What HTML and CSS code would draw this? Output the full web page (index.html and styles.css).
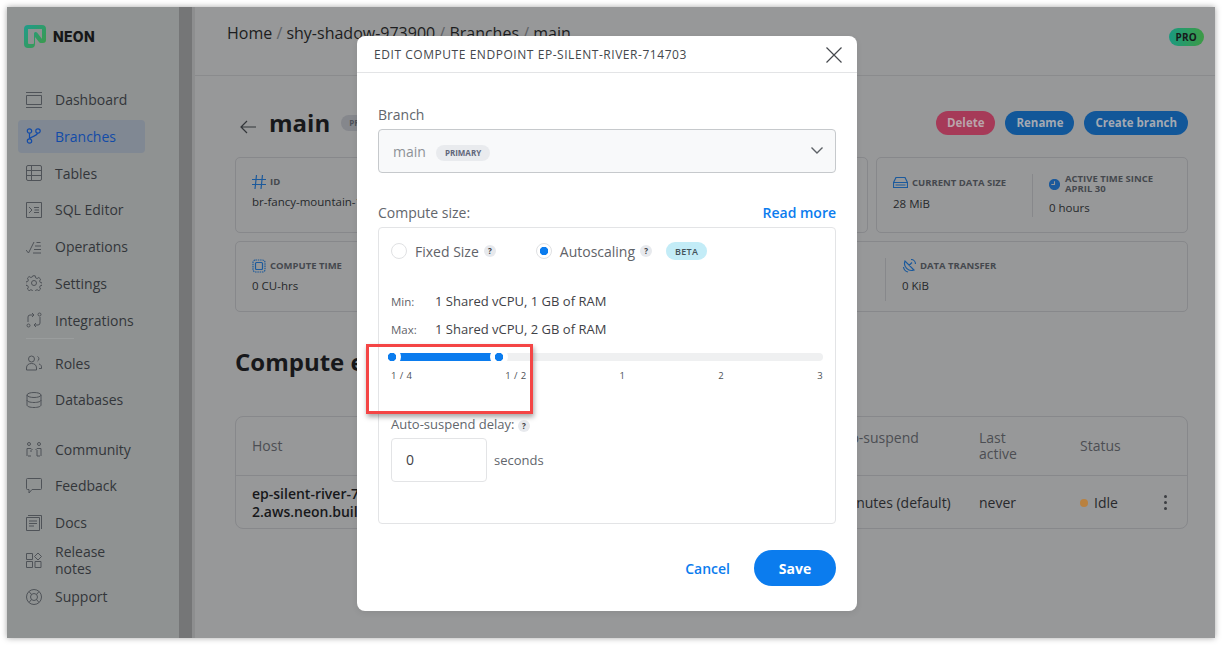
FILE: index.html
```html
<!DOCTYPE html>
<html lang="en">
<head>
  <meta charset="UTF-8">
  <title>Neon - Edit compute endpoint</title>
  <link rel="stylesheet" href="styles.css">
</head>
<body>
  <div class="window">
    <aside class="sidebar">
      <div class="logo">
        <svg width="22" height="23" viewBox="0 0 22 23"><defs><linearGradient id="lg" x1="0" y1="0" x2="1" y2="1"><stop offset="0" stop-color="#1f9c8d"/><stop offset="1" stop-color="#3f9a45"/></linearGradient></defs><path d="M4 0h14a4 4 0 0 1 4 4v11a3 3 0 0 1-3 3h-2a2 2 0 0 1-2-1l-4-5v7a4 4 0 0 1-4 4H4a4 4 0 0 1-4-4V4a4 4 0 0 1 4-4z" fill="url(#lg)"/><path d="M4 4h14v10l-5-6.500c-1-1-3-.5-3 1V18a1 1 0 0 1-1 1H5a1 1 0 0 1-1-1z" fill="#8f9292"/></svg>
        <span class="logo-text">NEON</span>
      </div>
      <nav class="nav">
        <a class="nav-item"><svg class="ico" viewBox="0 0 16 16"><path d="M0 .5h16M0 15.500h16M.5 3.500h15v9H.5z"/></svg>Dashboard</a>
        <a class="nav-item active"><svg class="ico" viewBox="0 0 16 16"><circle cx="3.500" cy="3" r="2.200"/><circle cx="12" cy="3" r="2.200"/><circle cx="3.500" cy="13" r="2.200"/><path d="M3.500 5.200v5.600M11.500 5.200C11 8.500 5 8 3.800 10.800"/></svg>Branches</a>
        <a class="nav-item"><svg class="ico" viewBox="0 0 16 16"><rect x=".5" y=".5" width="15" height="15" rx="1.500"/><path d="M.5 5.500h15M.5 10.500h15M5.500 .5v15"/></svg>Tables</a>
        <a class="nav-item"><svg class="ico" viewBox="0 0 16 16"><path d="M.5.5h15v15H.5zM3 5l3 3-3 3M8 5.500h5M8.500 8h4.500M8 10.500h5"/></svg>SQL Editor</a>
        <a class="nav-item"><svg class="ico" viewBox="0 0 16 16"><path d="M0 11l2.500 3L8 3M9 7h6M8 10.500h7M7 14h8M10.500 3.500h4"/></svg>Operations</a>
        <a class="nav-item"><svg class="ico" viewBox="0 0 16 16"><circle cx="8" cy="8" r="2.500"/><path d="M6.800.8h2.400l.4 2 1.500.7 1.800-1 1.700 1.700-1 1.800.7 1.500 2 .4v2.400l-2 .4-.7 1.500 1 1.800-1.700 1.700-1.800-1-1.500.7-.4 2H6.800l-.4-2-1.500-.7-1.800 1-1.700-1.700 1-1.800-.7-1.500-2-.4V6.900l2-.4.7-1.500-1-1.800 1.700-1.700 1.800 1 1.500-.7z"/></svg>Settings</a>
        <a class="nav-item"><svg class="ico" viewBox="0 0 16 16"><circle cx="13.500" cy="2.500" r="1.500"/><circle cx="2.500" cy="13.500" r="1.500"/><path d="M2 10V5a2 2 0 0 1 2-2h4M6 1L8 3 6 5M14 5v6a2 2 0 0 1-2 2H8M10 11l-2 2 2 2"/></svg>Integrations</a>
        <div class="nav-rule"></div>
        <a class="nav-item"><svg class="ico" viewBox="0 0 16 16"><circle cx="5.500" cy="4" r="3"/><path d="M.5 15v-2c0-3 2-4.500 5-4.500s5 1.500 5 4.500v2zM11.500 1.500a2.500 2.500 0 0 1 0 4.500M13 9c2 .5 2.800 2 2.500 4.500h-2.500"/></svg>Roles</a>
        <a class="nav-item"><svg class="ico" viewBox="0 0 16 16"><ellipse cx="8" cy="3" rx="7" ry="2.500"/><path d="M1 3v10c0 1.500 3 2.500 7 2.500s7-1 7-2.500V3M1 8c0 1.500 3 2.500 7 2.500S15 9.500 15 8"/></svg>Databases</a>
        <div class="nav-gap"></div>
        <a class="nav-item"><svg class="ico" viewBox="0 0 16 16"><circle cx="3" cy="3" r="1.500"/><circle cx="13" cy="3" r="1.500"/><path d="M1 15V7.500h4L6.500 9M5 15H2M15 15V7.500h-4L9.500 9M11 15h3M11 9v6M5 9v2"/></svg>Community</a>
        <a class="nav-item"><svg class="ico" viewBox="0 0 16 16"><path d="M1.500.5h13a1 1 0 0 1 1 1v9a1 1 0 0 1-1 1H6L3 15v-3.500H1.500a1 1 0 0 1-1-1v-9a1 1 0 0 1 1-1z"/></svg>Feedback</a>
        <a class="nav-item"><svg class="ico" viewBox="0 0 16 16"><path d="M.5 2.500h13v13H.5zM2 .5h13.500V14M3 6h8M3 8.500h8M3 11h5"/></svg>Docs</a>
        <a class="nav-item tall"><svg class="ico" viewBox="0 0 16 16"><path d="M.5 1.500h6v6h-6zM.5 9.500h6v6h-6zM9 9.500h6v6H9zM12 1l3.500 3.500L12 8 8.500 4.500z"/></svg><span>Release<br>notes</span></a>
        <a class="nav-item"><svg class="ico" viewBox="0 0 16 16"><circle cx="8" cy="8" r="7.500"/><circle cx="8" cy="8" r="3.500"/><path d="M3 2.500l2.500 3M13 2.500l-2.500 3M3 13.500l2.500-3M13 13.500l-2.500-3"/></svg>Support</a>
      </nav>
    </aside>
    <div class="scrollbar"></div>
    <main class="main">
      <header class="topbar">
        <div class="crumbs">Home <i>/</i> shy-shadow-973900 <i>/</i> Branches <i>/</i> main</div>
        <span class="pro">PRO</span>
      </header>
      <div class="content">
        <div class="title-row">
          <svg class="back" width="16" height="14" viewBox="0 0 16 14"><path d="M16 7H1M7 1L1 7l6 6"/></svg>
          <h1>main</h1>
          <span class="chip">PRIMARY</span>
          <div class="actions">
            <button class="pill red">Delete</button>
            <button class="pill blue">Rename</button>
            <button class="pill blue">Create branch</button>
          </div>
        </div>
        <div class="cards">
          <div class="card grow">
            <div class="stat">
              <div class="stat-head"><svg class="sico" viewBox="0 0 14 14"><path d="M4.500 0L3 14M10.500 0L9 14M0 4.500h14M0 9.500h14"/></svg>ID</div>
              <div class="stat-val">br-fancy-mountain-123456</div>
            </div>
          </div>
          <div class="card side">
            <div class="stat first">
              <div class="stat-head"><svg class="sico wide" viewBox="0 0 15 11"><path d="M.5 5.500L3 .5h9l2.500 5v5H.5zM.5 5.500h14M2.500 8h10"/></svg>CURRENT DATA SIZE</div>
              <div class="stat-val">28 MiB</div>
            </div>
            <div class="stat second">
              <div class="stat-head two"><svg class="sico" viewBox="0 0 12 12"><circle cx="6" cy="6" r="5.500" fill="#1c5a9c"/><path d="M6 2.500V6H2.500" stroke="#979899"/></svg><span>ACTIVE TIME SINCE<br>APRIL 30</span></div>
              <div class="stat-val">0 hours</div>
            </div>
          </div>
        </div>
        <div class="cards row2">
          <div class="card grow">
            <div class="stat">
              <div class="stat-head"><svg class="sico chip-ico" viewBox="0 0 14 14"><rect x="1" y="1" width="12" height="12" rx="2.500" stroke-dasharray="1.500 .8"/><rect x="3.500" y="3.500" width="7" height="7" rx="1"/></svg>COMPUTE TIME</div>
              <div class="stat-val">0 CU-hrs</div>
            </div>
            <div class="stat transfer">
              <div class="stat-head"><svg class="sico dish" viewBox="0 0 14 14"><path d="M3 2a7 7 0 0 0 9 9zM7 6.500L10 3.500M9 .5a4.500 4.500 0 0 1 4.500 4.500M1.500 8A6 6 0 0 0 6 13"/></svg>DATA TRANSFER</div>
              <div class="stat-val">0 KiB</div>
            </div>
          </div>
        </div>
        <h2>Compute endpoints</h2>
        <div class="table">
          <div class="tr th">
            <div class="c-host">Host</div>
            <div class="c-susp">Auto-suspend</div>
            <div class="c-last">Last<br>active</div>
            <div class="c-status">Status</div>
          </div>
          <div class="tr td">
            <div class="c-host host-name">ep-silent-river-714703.us-east-<br>2.aws.neon.build</div>
            <div class="c-susp">5 minutes (default)</div>
            <div class="c-last">never</div>
            <div class="c-status"><span class="dot"></span>Idle</div>
            <div class="more"><b></b><b></b><b></b></div>
          </div>
        </div>
      </div>
    </main>

    <section class="modal">
      <div class="modal-head">
        <span>EDIT COMPUTE ENDPOINT EP-SILENT-RIVER-714703</span>
        <svg width="16" height="16" viewBox="0 0 16 16"><path d="M.5.5l15 15M15.500.5l-15 15"/></svg>
      </div>
      <div class="modal-body">
        <label class="lbl">Branch</label>
        <div class="select">
          <span class="sel-val">main</span><span class="sel-chip">PRIMARY</span>
          <svg class="chev" width="12" height="7" viewBox="0 0 12 7"><path d="M.5.5L6 6 11.500.5"/></svg>
        </div>
        <div class="size-head">
          <label class="lbl">Compute size:</label>
          <a class="link">Read more</a>
        </div>
        <div class="size-box">
          <div class="radios">
            <span class="radio"></span><span class="radio-txt">Fixed Size</span><span class="q">?</span>
            <span class="radio on"></span><span class="radio-txt">Autoscaling</span><span class="q">?</span>
            <span class="beta">BETA</span>
          </div>
          <div class="spec"><span>Min:</span>1 Shared vCPU, 1 GB of RAM</div>
          <div class="spec"><span>Max:</span>1 Shared vCPU, 2 GB of RAM</div>
          <div class="slider">
            <div class="fill"></div>
            <div class="handle h1"></div>
            <div class="handle h2"></div>
          </div>
          <div class="ticks"><span>1 / 4</span><span>1 / 2</span><span>1</span><span>2</span><span>3</span></div>
          <div class="delay-lbl">Auto-suspend delay: <span class="q">?</span></div>
          <div class="delay"><div class="num">0</div>seconds</div>
        </div>
        <div class="modal-foot">
          <a class="link cancel">Cancel</a>
          <button class="save">Save</button>
        </div>
      </div>
    </section>
    <div class="callout"></div>
  </div>
</body>
</html>
```

FILE: styles.css
```css
* { box-sizing: border-box; }
html, body { margin: 0; height: 100%; }
body { background: #fff; padding: 7px 8px 8px 7px; overflow: hidden; font-family: "Open Sans", "Noto Sans", sans-serif; color: #1c1d20; }
svg { fill: none; flex: none; }

.window { position: relative; display: flex; height: 631px; background: #979899; box-shadow: 0 0 6px rgba(0,0,0,0.35); overflow: hidden; }

.sidebar { width: 172px; flex: none; background: #8f9292; padding: 17px 0 0 11px; }
.logo { display: flex; align-items: center; gap: 7px; padding-left: 6px; height: 24px; }
.logo-text { font-family: Inter, sans-serif; font-weight: 800; font-size: 14px; letter-spacing: 0.3px; color: #161718; }
.nav { margin-top: 35px; width: 127px; }
.nav-item { display: flex; align-items: center; height: 33px; margin-bottom: 3.8px; padding-left: 8px; border-radius: 4px; font-size: 14px; font-weight: 500; color: #33363a; line-height: 17px; }
.nav-item .ico { width: 16px; height: 16px; margin-right: 13px; stroke: #4f5358; stroke-width: 1; }
.nav-item.active { background: #808893; color: #124ba8; }
.nav-item.active .ico { stroke: #124ba8; stroke-width: 1.2; }
.nav-item.tall { height: 34px; margin-bottom: 3px; }
.nav-rule { width: 48px; height: 1px; background: #9a9d9d; margin: -3px 0 8px 8px; }
.nav-gap { height: 12.500px; }

.scrollbar { width: 13px; flex: none; background: #757677; }

.main { flex: 1; min-width: 0; border-left: 3px solid #8d8e8f; }
.topbar { display: flex; justify-content: space-between; height: 69px; border-bottom: 1px solid #8a8b8d; padding: 15px 11px 0 32px; }
.crumbs { font-size: 16px; line-height: 22px; color: #1c1d20; }
.crumbs i { font-style: normal; color: #5f6266; }
.pro { height: 18px; margin-top: 6px; padding: 0 7px; border-radius: 9px; background: linear-gradient(90deg, #1a9a80, #3d9a45); font-size: 10px; font-weight: 700; line-height: 18px; letter-spacing: 0.2px; color: #17191b; }

.content { padding: 0 27px 0 40px; }
.title-row { display: flex; align-items: center; height: 81px; padding-top: 12px; }
.back { margin: 8px 13px 0 5px; stroke: #33363a; stroke-width: 1.2; }
.title-row h1 { margin: 0; font-size: 24px; font-weight: 700; color: #17181b; }
.chip { margin-left: 11px; padding: 0 8px; height: 16px; border-radius: 8px; background: #85878c; font-size: 8px; font-weight: 700; line-height: 16px; color: #4d5059; }
.actions { margin-left: auto; display: flex; gap: 10px; }
.pill { height: 24px; padding: 0 11px; border: 0; border-radius: 12px; font-family: inherit; font-size: 11.500px; font-weight: 700; color: #a4a9b2; }
.red { background: #a63a58; color: #b9a4ab; }
.blue { background: #125799; }

.cards { display: flex; gap: 8px; }
.row2 { margin-top: 8px; }
.card { border: 1px solid #87888b; border-radius: 5px; display: flex; }
.grow { flex: 1; min-width: 0; height: 76px; padding: 16px; position: relative; }
.row2 .grow { height: 71px; }
.side { width: 312px; flex: none; padding: 16px; height: 76px; }
.stat-head { display: flex; align-items: center; gap: 4px; height: 15px; font-size: 9.500px; font-weight: 700; color: #45484e; line-height: 10px; }
.stat-val { margin-top: 5px; font-size: 11.500px; line-height: 15px; color: #26282b; white-space: nowrap; }
.sico { width: 14px; height: 14px; stroke: #1c5a9c; stroke-width: 1.2; }
.sico.wide { width: 15px; height: 11px; }
.sico.chip-ico { stroke: #1c5a9c; }
.first { width: 139px; padding-top: 1px; }
.first .stat-val { margin-top: 6px; }
.second { border-left: 1px solid #87888b; margin-top: 0; padding-left: 16px; height: 43px; flex: 1; }
.second .sico { width: 11px; height: 11px; }
.second .stat-head { height: 20px; gap: 5px; }
.second .stat-val { margin-top: 6px; }
.row2 .stat { padding-top: 0; }
.transfer { margin-left: auto; width: 302px; border-left: 1px solid #87888b; padding-left: 16px; margin-right: -16px; height: 43px; }

h2 { margin: 33px 0 38px; font-size: 24px; line-height: 33px; font-weight: 700; color: #17181b; }

.table { border: 1px solid #87888b; border-radius: 8px; height: 113px; }
.tr { display: flex; align-items: center; padding-left: 16px; font-size: 14px; position: relative; }
.th { height: 59px; border-bottom: 1px solid #87888b; color: #4c4e53; line-height: 16px; }
.td { height: 53px; color: #28292c; }
.c-host { width: 576px; }
.host-name { font-weight: 600; color: #17181b; line-height: 18px; }
.c-susp { width: 151px; }
.th .c-susp { margin-bottom: 16px; }
.c-last { width: 101px; }
.dot { display: inline-block; width: 8px; height: 8px; margin-right: 6px; border-radius: 50%; background: #b9813f; vertical-align: 1px; }
.more { position: absolute; right: 20px; top: 19px; display: flex; flex-direction: column; gap: 3px; }
.more b { width: 3px; height: 3px; border-radius: 50%; background: #3c3e42; }

.modal { position: absolute; left: 350px; top: 29px; width: 500px; height: 575px; background: #fff; border-radius: 8px; box-shadow: 0 2px 6px rgba(0,0,0,0.08); }
.modal-head { display: flex; align-items: center; justify-content: space-between; height: 36px; margin-top: 0; padding: 0 15px 0 17px; height: 37px; border-bottom: 1px solid #e3e4e6; font-size: 12px; letter-spacing: 0.55px; color: #44474c; }
.modal-head svg { stroke: #45484d; stroke-width: 1.2; margin-top: 1px; }
.modal-body { padding: 32px 21px 0; }
.lbl { display: block; font-size: 14px; line-height: 19px; color: #62666c; }
.select { position: relative; display: flex; align-items: center; height: 44px; margin-top: 5px; padding-left: 14px; background: #f8f9fa; border: 1px solid #c6c9cc; border-radius: 4px; }
.sel-val { font-size: 14px; color: #8e9297; margin-right: 10px; }
.sel-chip { height: 16px; margin-top: 3px; padding: 0 9px; border-radius: 8px; background: #e9ebee; font-size: 8px; font-weight: 700; line-height: 16px; color: #62677a; }
.chev { position: absolute; right: 12px; top: 17px; stroke: #5d6166; stroke-width: 1.400; }
.size-head { display: flex; justify-content: space-between; align-items: center; margin-top: 30px; height: 19px; }
.link { font-size: 14px; font-weight: 600; color: #0b7cee; }
.size-box { height: 297px; margin-top: 5px; padding: 0 12px; border: 1px solid #e3e4e6; border-radius: 4px; }
.radios { display: flex; align-items: center; height: 18px; margin-top: 14px; font-size: 14px; color: #5f6369; }
.radio { width: 16px; height: 16px; margin-right: 8px; border: 1px solid #e0e1e3; border-radius: 50%; background: #fff; }
.radio.on { margin-left: 40px; background: radial-gradient(circle, #0b7cee 0 4px, #fff 4.500px); }
.radio-txt { margin-right: 5px; font-weight: 500; }
.q { display: inline-block; width: 12px; height: 12px; border-radius: 50%; background: #e7e9ed; font-size: 8px; font-weight: 700; line-height: 12px; text-align: center; color: #3c3f45; }
.beta { margin-left: 14px; width: 41px; height: 18px; border-radius: 9px; background: #c3ecf7; font-size: 9px; font-weight: 600; letter-spacing: 0.3px; line-height: 19px; text-align: center; color: #44525a; }
.spec { display: flex; align-items: center; height: 28px; font-size: 13px; color: #3f4247; }
.radios + .spec { margin-top: 27px; }
.spec span { width: 44px; font-size: 11.500px; color: #5f6369; }
.slider { position: relative; height: 8px; margin-top: 10px; margin-left: 1px; margin-right: 0; background: #eff0f1; border-radius: 4px; }
.fill { position: absolute; left: 0; top: 0; width: 107px; height: 8px; background: #0b7cee; }
.handle { position: absolute; top: -5px; width: 18px; height: 18px; margin-left: -9px; border-radius: 50%; background: radial-gradient(circle, #0b7cee 0 4px, #fff 4.500px); }
.h1 { left: 0; }
.h2 { left: 107px; }
.ticks { display: flex; justify-content: space-between; margin-top: 8px; height: 14px; font-size: 9.500px; letter-spacing: 0.4px; line-height: 14px; color: #4e5156; }
.delay-lbl { margin-top: 32px; font-size: 13px; line-height: 18px; color: #62666c; }
.delay { display: flex; align-items: center; gap: 7px; margin-top: 5px; font-size: 13px; color: #62666c; }
.num { width: 96px; height: 44px; padding-left: 14px; border: 1px solid #e3e4e6; border-radius: 4px; font-size: 14px; line-height: 42px; color: #3f4247; }
.modal-foot { display: flex; justify-content: flex-end; align-items: center; gap: 24px; margin-top: 26px; }
.cancel { font-weight: 600; }
.save { width: 82px; height: 36px; border: 0; border-radius: 18px; background: #0b7cee; font-family: inherit; font-size: 14px; font-weight: 700; color: #fff; }

.callout { position: absolute; left: 359px; top: 337px; width: 167px; height: 70px; border: 3px solid #f44545; box-shadow: 1px 3px 5px rgba(0,0,0,0.35); }
```
